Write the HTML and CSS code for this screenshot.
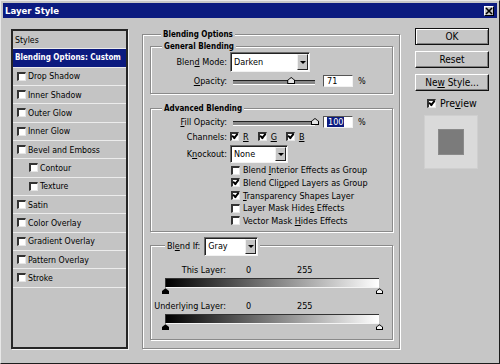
FILE: index.html
```html
<!DOCTYPE html>
<html lang="en">
<head>
    <meta charset="UTF-8">
    <title>Layer Style</title>
    <link rel="stylesheet" href="styles.css">
</head>
<body>
    <div class="dialog">
        <div class="titlebar">
            <span class="title">Layer Style</span>
            <span class="close">
                <svg width="8" height="8" viewBox="0 0 8 8"><path d="M1 1L7 7M7 1L1 7" stroke="#000" stroke-width="1.6"/></svg>
            </span>
        </div>

        <div class="content">
            <ul class="styles-list">
                <li class="plain">Styles</li>
                <li class="plain selected">Blending Options: Custom</li>
                <li><span class="check"></span>Drop Shadow</li>
                <li><span class="check"></span>Inner Shadow</li>
                <li><span class="check"></span>Outer Glow</li>
                <li><span class="check"></span>Inner Glow</li>
                <li><span class="check"></span>Bevel and Emboss</li>
                <li class="sub"><span class="check"></span>Contour</li>
                <li class="sub"><span class="check"></span>Texture</li>
                <li><span class="check"></span>Satin</li>
                <li><span class="check"></span>Color Overlay</li>
                <li><span class="check"></span>Gradient Overlay</li>
                <li><span class="check"></span>Pattern Overlay</li>
                <li><span class="check"></span>Stroke</li>
            </ul>

            <div class="group outer">
                <div class="group-title">Blending Options</div>

                <div class="group general">
                    <div class="group-title">General Blending</div>
                    <div class="row mode-row">
                        <span class="lbl">Blen<u>d</u> Mode:</span>
                        <div class="select mode-select"><span>Darken</span><span class="arrow"></span></div>
                    </div>
                    <div class="row slider-row">
                        <span class="lbl"><u>O</u>pacity:</span>
                        <div class="slider"><span class="thumb" style="left: 71%"></span></div>
                        <div class="field">71</div>
                        <span class="pct">%</span>
                    </div>
                </div>

                <div class="group advanced">
                    <div class="group-title">Advanced Blending</div>
                    <div class="row slider-row fill-row">
                        <span class="lbl"><u>F</u>ill Opacity:</span>
                        <div class="slider"><span class="thumb" style="left: 100%"></span></div>
                        <div class="field"><span class="hilite">100</span></div>
                        <span class="pct">%</span>
                    </div>
                    <div class="row channels-row">
                        <span class="lbl">Channels:</span>
                        <span class="channel"><span class="check on"></span><u>R</u></span>
                        <span class="channel"><span class="check on"></span><u>G</u></span>
                        <span class="channel"><span class="check on"></span><u>B</u></span>
                    </div>
                    <div class="row knock-row">
                        <span class="lbl">K<u>n</u>ockout:</span>
                        <div class="select knock-select"><span>None</span><span class="arrow"></span></div>
                    </div>
                    <div class="options">
                        <div class="option"><span class="check"></span><span>Blend <u>I</u>nterior Effects as Group</span></div>
                        <div class="option"><span class="check on"></span><span>Blend Cli<u>p</u>ped Layers as Group</span></div>
                        <div class="option"><span class="check on"></span><span><u>T</u>ransparency Shapes Layer</span></div>
                        <div class="option"><span class="check"></span><span>Layer Mask Hide<u>s</u> Effects</span></div>
                        <div class="option"><span class="check"></span><span>Vector Mask <u>H</u>ides Effects</span></div>
                    </div>
                </div>

                <div class="group blendif">
                    <div class="group-title blendif-title">
                        <span>Bl<u>e</u>nd If:</span>
                        <div class="select gray-select"><span>Gray</span><span class="arrow"></span></div>
                    </div>
                    <div class="row range-row">
                        <span class="lbl">This Layer:</span>
                        <span class="lo">0</span>
                        <span>255</span>
                    </div>
                    <div class="ramp"></div>
                    <div class="ramp-thumbs">
                        <span class="rthumb black"></span>
                        <span class="rthumb white"></span>
                    </div>
                    <div class="row range-row under-row">
                        <span class="lbl">Underlying Layer:</span>
                        <span class="lo">0</span>
                        <span>255</span>
                    </div>
                    <div class="ramp"></div>
                    <div class="ramp-thumbs">
                        <span class="rthumb black"></span>
                        <span class="rthumb white"></span>
                    </div>
                </div>
            </div>

            <div class="side">
                <div class="btn default"><span>OK</span></div>
                <div class="btn"><span>Reset</span></div>
                <div class="btn"><span>Ne<u>w</u> Style...</span></div>
                <div class="preview-row"><span class="check on"></span><span>Pre<u>v</u>iew</span></div>
                <div class="preview-box"><div class="swatch"></div></div>
            </div>
        </div>
    </div>
</body>
</html>
```

FILE: styles.css
```css
* {
    margin: 0;
    padding: 0;
    box-sizing: border-box;
}

body {
    font-family: "DejaVu Sans Condensed", "DejaVu Sans", sans-serif;
    font-size: 9px;
    color: #000;
    background: #c6c6c6;
}

u {
    text-decoration: underline;
    text-underline-offset: 1px;
}

.dialog {
    width: 500px;
    height: 364px;
    background: #c6c6c6;
    border: 1px solid;
    border-color: #e8e8e8 #1c1c1c #1c1c1c #e8e8e8;
}

.titlebar {
    height: 15px;
    margin: 2px 2px 0;
    padding: 0 3px 0 2px;
    background: #0b1a7f;
    display: flex;
    align-items: center;
    justify-content: space-between;
}

.title {
    color: #fff;
    font-weight: bold;
    font-size: 9.5px;
}

.close {
    width: 10px;
    height: 10px;
    background: #c6c6c6;
    border: 1px solid;
    border-color: #fff #000 #000 #fff;
    display: flex;
    align-items: center;
    justify-content: center;
}

.content {
    display: flex;
    align-items: flex-start;
    padding: 11px 0 0 10px;
}

/* styles list */
.styles-list {
    list-style: none;
    width: 117px;
    height: 320px;
    border: 2px solid #262626;
    box-shadow: 1px 1px 0 #f2f2f2;
    background: #c4c4c4;
}

.styles-list li {
    height: 18.33px;
    display: flex;
    align-items: center;
    padding-left: 3px;
    border-bottom: 1px solid #ececec;
    white-space: nowrap;
    font-size: 8.7px;
}

.styles-list li.plain {
    padding-left: 2px;
}

.styles-list li.selected {
    background: #0b1a7f;
    color: #fff;
    font-weight: bold;
    font-size: 8px;
}

.styles-list li.sub {
    padding-left: 15px;
}

.check {
    width: 9px;
    height: 9px;
    flex: none;
    background: #fff;
    border-style: solid;
    border-width: 2px 1px 1px 2px;
    border-color: #333 #e6e6e6 #e6e6e6 #333;
    margin-right: 2px;
    display: inline-flex;
    align-items: center;
    justify-content: center;
}

.styles-list .check {
    margin-left: 1px;
}

.check.on::after {
    content: "";
    width: 2px;
    height: 4px;
    border: solid #000;
    border-width: 0 2px 2px 0;
    transform: rotate(40deg) translate(-1px, -1px);
}

/* group boxes */
.group {
    border: 1px solid #8a8a8a;
    box-shadow: inset 1px 1px 0 #fff, 1px 1px 0 #fff;
}

.group-title {
    width: max-content;
    margin: -6px 0 0 11px;
    padding: 0 2px;
    background: #c6c6c6;
    font-weight: bold;
    font-size: 8px;
    line-height: 11px;
}

.outer {
    width: 258px;
    height: 315px;
    margin: 5px 0 0 14px;
    padding: 0 6px 0 7px;
}

.general {
    margin-top: 6px;
    padding-bottom: 6px;
}

.advanced {
    margin-top: 14px;
    padding-bottom: 4px;
}

.blendif {
    margin-top: 13px;
    padding-bottom: 8px;
}

.row {
    display: flex;
    align-items: center;
}

.lbl {
    width: 76px;
    margin-right: 3px;
    text-align: right;
}

.mode-row {
    height: 20px;
}

.slider-row {
    height: 12px;
    margin-top: 3px;
}

.fill-row {
    margin-top: 2px;
}

/* dropdowns */
.select {
    display: flex;
    align-items: center;
    justify-content: space-between;
    background: #fff;
    border: 1px solid;
    border-color: #6a6a6a #f2f2f2 #f2f2f2 #6a6a6a;
    box-shadow: inset 1px 1px 0 #222;
    padding: 1px 1px 1px 3px;
    font-weight: normal;
    font-size: 9px;
}

.select .arrow {
    width: 11px;
    height: 100%;
    background: #c6c6c6;
    border: 1px solid;
    border-color: #f0f0f0 #222 #222 #f0f0f0;
    display: flex;
    align-items: center;
    justify-content: center;
}

.select .arrow::after {
    content: "";
    border-left: 3px solid transparent;
    border-right: 3px solid transparent;
    border-top: 3px solid #000;
}

.mode-select {
    width: 80px;
    height: 20px;
}

.knock-select {
    width: 58px;
    height: 18px;
}

.gray-select {
    width: 54px;
    height: 19px;
    margin-left: 4px;
}

/* sliders */
.slider {
    position: relative;
    width: 82px;
    height: 12px;
    margin-left: 3px;
}

.slider::before {
    content: "";
    position: absolute;
    left: 0;
    right: 0;
    top: 5px;
    height: 3px;
    border-top: 1px solid #222;
    border-bottom: 1px solid #fff;
    background: #888;
}

.thumb {
    position: absolute;
    top: 2px;
    width: 8px;
    height: 7px;
    margin-left: -4px;
    background: #000;
    clip-path: polygon(0 100%, 0 45%, 50% 0, 100% 45%, 100% 100%);
}

.thumb::after {
    content: "";
    position: absolute;
    inset: 1px;
    background: #e4e4e4;
    clip-path: polygon(0 100%, 0 45%, 50% 0, 100% 45%, 100% 100%);
}

.field {
    width: 30px;
    height: 12px;
    margin-left: 8px;
    padding-left: 3px;
    background: #fff;
    border: 1px solid;
    border-color: #555 #f2f2f2 #f2f2f2 #555;
    display: flex;
    align-items: center;
    line-height: 10px;
}

.hilite {
    background: #0b1a7f;
    color: #fff;
    padding: 0 1px;
}

.pct {
    margin-left: 5px;
}

.channels-row {
    height: 11px;
    margin-top: 3px;
}

.channel {
    display: inline-flex;
    align-items: center;
    margin-right: 9px;
}

.channel .check {
    margin-right: 4px;
}

.knock-row {
    height: 18px;
    margin-top: 3px;
}

.options {
    margin-top: 1px;
    padding-left: 80px;
}

.option {
    height: 12.67px;
    display: flex;
    align-items: center;
    white-space: nowrap;
}

.option .check {
    margin-right: 3px;
}

/* blend if */
.blendif-title {
    display: flex;
    align-items: center;
    height: 19px;
    margin: -9px 0 0 14px;
    font-weight: normal;
    font-size: 9px;
}

.range-row {
    height: 10px;
    margin-top: 9px;
}

.range-row .lbl {
    width: 75px;
}

.range-row .lo {
    width: 68px;
    padding-left: 17px;
}

.under-row {
    margin-top: 6px;
}

.ramp {
    height: 10px;
    margin: 3px 13px 0 14px;
    background: linear-gradient(to right, #000, #fff);
    border-top: 1px solid #333;
    border-left: 1px solid #333;
    border-bottom: 1px solid #f4f4f4;
}

.ramp-thumbs {
    position: relative;
    height: 7px;
    margin: 0 13px 0 14px;
}

.rthumb {
    position: absolute;
    top: 0;
    width: 7px;
    height: 6px;
    background: #000;
    clip-path: polygon(0 100%, 0 45%, 50% 0, 100% 45%, 100% 100%);
}

.rthumb.black {
    left: -3px;
}

.rthumb.white {
    right: -4px;
}

.rthumb.white::after {
    content: "";
    position: absolute;
    inset: 1px;
    background: #f4f4f4;
    clip-path: polygon(0 100%, 0 45%, 50% 0, 100% 45%, 100% 100%);
}

/* right column */
.side {
    width: 74px;
    margin: -1px 0 0 15px;
    display: flex;
    flex-direction: column;
}

.btn {
    height: 17px;
    margin-bottom: 6px;
    display: flex;
    align-items: center;
    justify-content: center;
    font-size: 10px;
    background: #c6c6c6;
    border: 1px solid;
    border-color: #fff #111 #111 #fff;
    box-shadow: inset -1px -1px 0 #808080;
    white-space: nowrap;
}

.btn.default {
    border-color: #111;
    box-shadow: inset 1px 1px 0 #fff, inset -1px -1px 0 #808080;
}

.preview-row {
    height: 10px;
    margin-top: 1px;
    padding-left: 12px;
    display: flex;
    align-items: center;
    font-size: 10.5px;
}

.preview-row .check {
    margin-right: 4px;
}

.preview-box {
    width: 54px;
    height: 54px;
    margin: 7px 0 0 9px;
    background: #dadada;
    border: 1px solid #cfcfcf;
    display: flex;
    align-items: center;
    justify-content: center;
}

.swatch {
    width: 26px;
    height: 26px;
    background: #7b7b7b;
    border: 1px solid #8a8a8a;
}
```
